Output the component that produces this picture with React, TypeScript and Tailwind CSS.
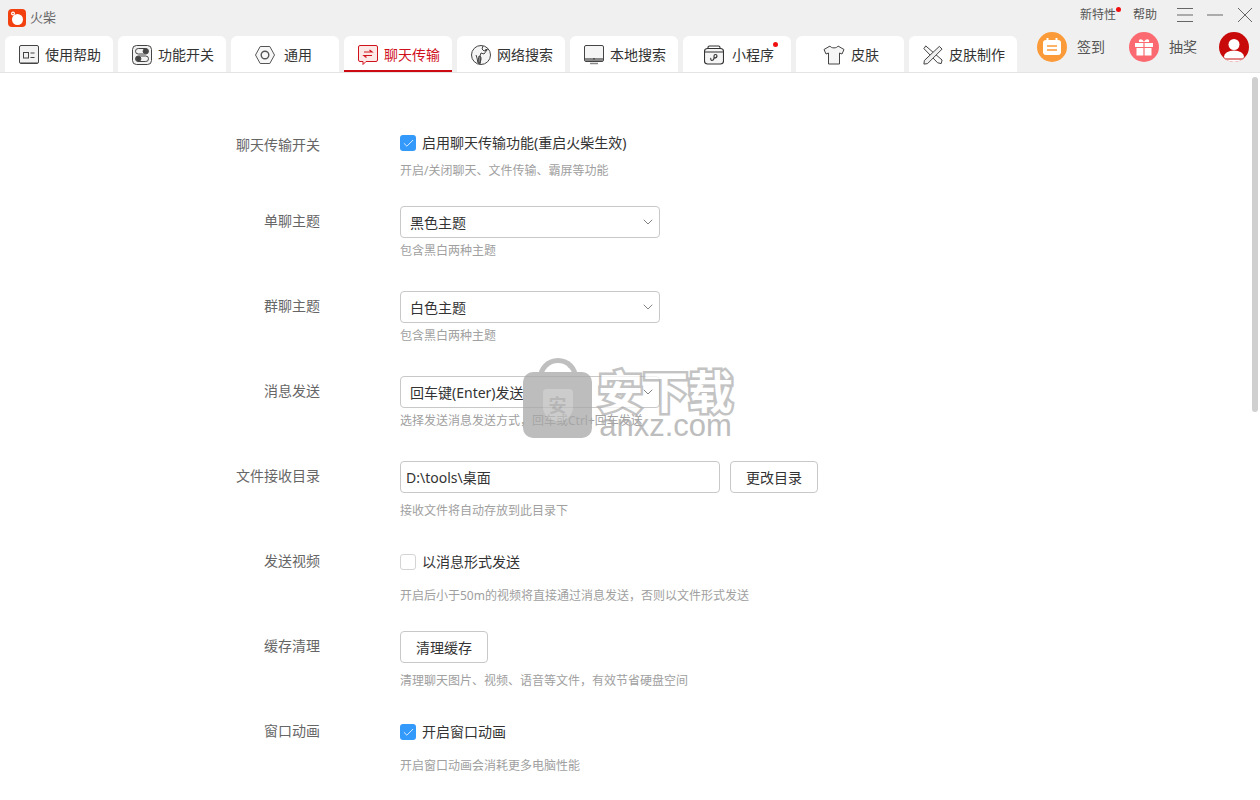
import type { ReactNode } from "react";
import { ChevronDown, Check } from "lucide-react";

function HelpIcon() {
  return (
    <svg width="20" height="20" viewBox="0 0 20 20" fill="none" stroke="#444" strokeWidth="1">
      <rect x="0.5" y="0.5" width="19" height="18" rx="1.5" fill="#f2f2f2" />
      <path d="M1 17.500h18" stroke="#999" />
      <rect x="4.5" y="7.5" width="5" height="5.500" />
      <path d="M11.5 8h4M11.5 12.500h4" />
    </svg>
  );
}

function SwitchIcon() {
  return (
    <svg width="20" height="20" viewBox="0 0 20 20" fill="none" stroke="#444" strokeWidth="1">
      <rect x="0.5" y="0.5" width="19" height="19" rx="4" fill="#f2f2f2" />
      <rect x="3.5" y="3.5" width="13" height="5.5" rx="2.75" />
      <circle cx="13.5" cy="6.2" r="2.4" fill="#444" />
      <rect x="3.5" y="11" width="13" height="5.5" rx="2.75" />
      <circle cx="6.5" cy="13.8" r="2.4" fill="#444" />
    </svg>
  );
}

function NutIcon() {
  return (
    <svg width="20" height="20" viewBox="0 0 20 20" fill="none" stroke="#555" strokeWidth="1">
      <path d="M5.2 1.5h9.6L19.5 10l-4.7 8.5H5.2L0.5 10z" fill="#f7f7f7" />
      <circle cx="10" cy="10" r="3.8" strokeWidth="1.4" />
    </svg>
  );
}

function ChatIcon() {
  return (
    <svg width="20" height="20" viewBox="0 0 20 20" fill="none" stroke="#d0121b" strokeWidth="1">
      <path d="M2 0.5h16a1.5 1.5 0 0 1 1.5 1.5v13a1.5 1.5 0 0 1-1.5 1.5H8l-3 3v-3H2A1.5 1.5 0 0 1 .5 15V2A1.5 1.5 0 0 1 2 .5z" fill="#fde8e8" />
      <path d="M6 7h8l-2.5-2M14 10.500H6l2.500 2" strokeWidth="1.2" />
    </svg>
  );
}

function GlobeIcon() {
  return (
    <svg width="20" height="20" viewBox="0 0 20 20" fill="none" stroke="#444" strokeWidth="1">
      <circle cx="10" cy="10" r="9.500" fill="#f5f5f5" />
      <path d="M12 1l-1 3 2 2 3-1-3 4-3-1-1 3 1 3-1 5-2-1-1-5-1-3M17 4l-3 1" />
      <path d="M8 11l2 1-1 6-2-1z" fill="#888" />
    </svg>
  );
}

function MonitorIcon() {
  return (
    <svg width="20" height="20" viewBox="0 0 20 20" fill="none" stroke="#444" strokeWidth="1">
      <rect x="0.500" y="0.500" width="19" height="16" rx="1.500" fill="#f5f5f5" />
      <path d="M1 14.500h18" stroke="#888" strokeWidth="3" />
      <path d="M6 18.500h8" strokeWidth="1.500" stroke="#888" />
      <path d="M10 13v1.500" stroke="#222" />
    </svg>
  );
}

function BoxIcon() {
  return (
    <svg width="20" height="20" viewBox="0 0 20 20" fill="none" stroke="#333" strokeWidth="1.100">
      <rect x="0.500" y="3.500" width="19" height="15.500" rx="3" fill="#f5f5f5" />
      <path d="M4 3.500V2.500a1.500 1.500 0 0 1 1.500-1.500h9a1.500 1.500 0 0 1 1.500 1.500v1M1 7h18" />
      <path d="M7.500 15.500c1.500 0 2.500-1 2.500-2.500v-2c0-2 3-2 3 0s-2 2-3 2M7 13c-1 1 0 2 .5 2.500" />
    </svg>
  );
}

function ShirtIcon() {
  return (
    <svg width="22" height="20" viewBox="0 0 22 20" fill="none" stroke="#444" strokeWidth="1">
      <path d="M7 1L1 4.500 3 9l2.500-1v11h11V8L19 9l2-4.500L15 1c-1 2.500-7 2.500-8 0z" fill="#f5f5f5" />
    </svg>
  );
}

function ToolsIcon() {
  return (
    <svg width="20" height="20" viewBox="0 0 22 22" fill="none" stroke="#444" strokeWidth="1.100">
      <path d="M3 1l18 15.500-1 4-4-1L1 4z" fill="#fafafa" />
      <path d="M18 1.500l3 3L5 20.500 1 21l.5-4z" fill="#f0f0f0" />
    </svg>
  );
}

function Logo() {
  return (
    <svg width="18" height="18" viewBox="0 0 18 18">
      <rect width="18" height="18" rx="4" fill="#f2400f" />
      <circle cx="9.500" cy="10.500" r="5.500" fill="#fff" />
      <circle cx="5" cy="4.500" r="2" fill="#fff" />
      <circle cx="5" cy="4.500" r="0.800" fill="#f2400f" />
    </svg>
  );
}

const tabs: { label: string; icon: ReactNode; active?: boolean; dot?: boolean; cls: string }[] = [
  { label: "使用帮助", icon: <HelpIcon />, cls: "gap-[6px] pl-[2px]" },
  { label: "功能开关", icon: <SwitchIcon />, cls: "gap-[6px] pl-[2px]" },
  { label: "通用", icon: <NutIcon />, cls: "gap-[9px] pr-[3px]" },
  { label: "聊天传输", icon: <ChatIcon />, active: true, cls: "gap-[6px] pl-[2px]" },
  { label: "网络搜索", icon: <GlobeIcon />, cls: "gap-[6px] pl-[2px]" },
  { label: "本地搜索", icon: <MonitorIcon />, cls: "gap-[6px] pl-[2px]" },
  { label: "小程序", icon: <BoxIcon />, dot: true, cls: "gap-[8px] pl-[4px]" },
  { label: "皮肤", icon: <ShirtIcon />, cls: "gap-[6px] pl-[2px]" },
  { label: "皮肤制作", icon: <ToolsIcon />, cls: "gap-[6px] pl-[2px]" },
];

function Tab({ label, icon, active, dot, cls }: (typeof tabs)[number]) {
  return (
    <div
      className={`relative flex h-9 w-[108px] items-center justify-center rounded-t-[6px] bg-white pt-[2px] text-sm ${cls} ${
        active ? "text-[#d0101c]" : "text-[#333]"
      }`}
    >
      {icon}
      <span>{label}</span>
      {dot && <span className="absolute right-[13px] top-[6px] h-[5px] w-[5px] rounded-full bg-[#f01010]" />}
      {active && <span className="absolute inset-x-0 bottom-0 h-[2px] bg-[#cc0a12]" />}
    </div>
  );
}

function TitleBar() {
  return (
    <div className="flex h-9 items-center pl-2 pr-[7px]">
      <Logo />
      <span className="ml-1 text-[13px] text-[#666]">火柴</span>
      <div className="-mt-[6px] ml-auto flex items-center text-xs text-[#555]">
        <span className="relative">
          新特性
          <span className="absolute -right-[5px] top-0 h-[5px] w-[5px] rounded-full bg-[#f01010]" />
        </span>
        <span className="ml-[17px]">帮助</span>
        <svg className="ml-5" width="16" height="16" viewBox="0 0 16 16" stroke="#666" strokeWidth="1">
          <path d="M0 1.500h16M0 8h16M0 14.500h16" />
        </svg>
        <svg className="ml-[14px]" width="16" height="16" viewBox="0 0 16 16" stroke="#666" strokeWidth="1">
          <path d="M0 8h16" />
        </svg>
        <svg className="ml-[14px]" width="16" height="16" viewBox="0 0 16 16" stroke="#666" strokeWidth="1">
          <path d="M1 1l14 14M15 1L1 15" />
        </svg>
      </div>
    </div>
  );
}

function TabBar() {
  return (
    <div className="flex h-[37px] border-b border-[#e4e4e4] pl-[5px]">
      <div className="flex gap-[5px]">
        {tabs.map((t) => (
          <Tab key={t.label} {...t} />
        ))}
      </div>
      <div className="-mt-[4px] flex items-start text-sm text-[#555]">
        <svg className="ml-5" width="30" height="30" viewBox="0 0 30 30">
          <circle cx="15" cy="15" r="15" fill="#fb9a38" />
          <rect x="6" y="8" width="18" height="15" rx="3" fill="#fff" />
          <path d="M10.500 6v4M19.500 6v4" stroke="#fff" strokeWidth="2" />
          <path d="M10 14h10M10 18h10" stroke="#fb9a38" strokeWidth="1.500" />
        </svg>
        <span className="ml-[10px] mt-[5px]">签到</span>
        <svg className="ml-6" width="30" height="30" viewBox="0 0 30 30">
          <circle cx="15" cy="15" r="15" fill="#fb6a70" />
          <rect x="6" y="11" width="18" height="4" fill="#fff" />
          <rect x="7.500" y="16" width="15" height="7.500" fill="#fff" />
          <path d="M15 10c-2-4-6-3-5 0zM15 10c2-4 6-3 5 0z" fill="#fff" />
          <path d="M15 10v14" stroke="#fb6a70" strokeWidth="1.200" />
        </svg>
        <span className="ml-[10px] mt-[5px]">抽奖</span>
        <svg className="ml-[22px]" width="30" height="30" viewBox="0 0 30 30">
          <defs>
            <clipPath id="avatar">
              <circle cx="15" cy="15" r="15" />
            </clipPath>
          </defs>
          <circle cx="15" cy="15" r="15" fill="#c80a0a" />
          <g clipPath="url(#avatar)">
            <circle cx="15" cy="12.500" r="5.500" fill="#fff" />
            <ellipse cx="15" cy="24.500" rx="10" ry="6" fill="#fff" />
            <path d="M4 27h22" stroke="#c80a0a" strokeWidth="1" />
          </g>
        </svg>
      </div>
    </div>
  );
}

function Row({ label, children, first }: { label: string; children: ReactNode; first?: boolean }) {
  return (
    <div className={`flex ${first ? "h-[76px]" : "h-[85px]"}`}>
      <div className="mt-[5px] w-[320px] text-right text-sm leading-5 text-[#666]">{label}</div>
      <div className="ml-[80px]">{children}</div>
    </div>
  );
}

function Hint({ children, className }: { children: ReactNode; className: string }) {
  return <div className={`text-xs leading-[18px] text-[#a0a0a0] ${className}`}>{children}</div>;
}

function CheckBox({ label, checked }: { label: string; checked?: boolean }) {
  return (
    <div className="flex h-4 items-center gap-[6px] text-sm text-[#333]">
      {checked ? (
        <span className="flex h-4 w-4 items-center justify-center rounded-[3px] bg-[#3399fb]">
          <Check size={13} strokeWidth={1.500} className="text-white" />
        </span>
      ) : (
        <span className="h-4 w-4 rounded-[3px] border border-[#d4d4d4] bg-white" />
      )}
      <span>{label}</span>
    </div>
  );
}

function Select({ value }: { value: string }) {
  return (
    <div className="flex h-8 w-[260px] items-center justify-between rounded-[4px] border border-[#c8c8c8] pl-[9px] pr-[3px] pt-[2px] text-sm text-[#333]">
      <span>{value}</span>
      <ChevronDown size={16} strokeWidth={1} className="-mt-[2px] text-[#444]" />
    </div>
  );
}

function Button({ children }: { children: ReactNode }) {
  return (
    <div className="flex h-8 w-[88px] items-center justify-center rounded-[4px] border border-[#c8c8c8] pt-[2px] text-sm text-[#333]">
      {children}
    </div>
  );
}

function Watermark() {
  return (
    <div className="absolute left-[523px] top-[358px] flex opacity-75">
      <div className="flex flex-col items-center">
        <div className="h-[24px] w-[40px] rounded-t-[20px] border-[5px] border-b-0 border-[#aaa]" />
        <div className="-mt-[10px] flex h-[66px] w-[69px] items-center justify-center rounded-[10px] bg-[#a8a8a8]">
          <div className="flex h-[32px] w-[30px] items-center justify-center rounded-b-[14px] rounded-t-[4px] bg-[#bcbcbc] text-lg font-bold text-[#a0a0a0]">
            安
          </div>
        </div>
      </div>
      <div className="ml-[6px] mt-[9px] flex flex-col items-center">
        <div className="text-[45px] font-bold leading-[50px] text-white [-webkit-text-stroke:5px_#b0b0b0] [paint-order:stroke_fill]">
          安下载
        </div>
        <div className="-mt-[6px] font-['Liberation_Sans',sans-serif] text-[31px] leading-[30px] text-[#a8a8a8]">
          anxz.com
        </div>
      </div>
    </div>
  );
}

export default function App() {
  return (
    <div className="relative h-[800px] w-[1260px] overflow-hidden bg-[#f0f0f0] font-['Noto_Sans','Noto_Sans_CJK_SC',sans-serif]">
      <TitleBar />
      <TabBar />
      <div className="relative h-[727px] overflow-hidden bg-white pt-[57px]">
        <Row label="聊天传输开关" first>
          <div className="mt-[5px]">
            <CheckBox label="启用聊天传输功能(重启火柴生效)" checked />
          </div>
          <Hint className="mt-[11px]">开启/关闭聊天、文件传输、霸屏等功能</Hint>
        </Row>
        <Row label="单聊主题">
          <Select value="黑色主题" />
          <Hint className="mt-[4px]">包含黑白两种主题</Hint>
        </Row>
        <Row label="群聊主题">
          <Select value="白色主题" />
          <Hint className="mt-[4px]">包含黑白两种主题</Hint>
        </Row>
        <Row label="消息发送">
          <Select value="回车键(Enter)发送" />
          <Hint className="mt-[4px]">选择发送消息发送方式，回车或Ctrl+回车发送</Hint>
        </Row>
        <Row label="文件接收目录">
          <div className="flex gap-[10px]">
            <div className="flex h-8 w-[320px] items-center rounded-[4px] border border-[#c8c8c8] pl-[5px] pt-[1px] text-sm text-[#333]">
              D:\tools\桌面
            </div>
            <Button>更改目录</Button>
          </div>
          <Hint className="mt-[9px]">接收文件将自动存放到此目录下</Hint>
        </Row>
        <Row label="发送视频">
          <div className="mt-2">
            <CheckBox label="以消息形式发送" />
          </div>
          <Hint className="mt-[17px]">开启后小于50m的视频将直接通过消息发送，否则以文件形式发送</Hint>
        </Row>
        <Row label="缓存清理">
          <Button>清理缓存</Button>
          <Hint className="mt-[9px]">清理聊天图片、视频、语音等文件，有效节省硬盘空间</Hint>
        </Row>
        <Row label="窗口动画">
          <div className="mt-2">
            <CheckBox label="开启窗口动画" checked />
          </div>
          <Hint className="mt-[17px]">开启窗口动画会消耗更多电脑性能</Hint>
        </Row>
        <div className="absolute right-[2px] top-[4px] h-[335px] w-[6px] rounded-full bg-[#d0d0d0]" />
      </div>
      <Watermark />
    </div>
  );
}
